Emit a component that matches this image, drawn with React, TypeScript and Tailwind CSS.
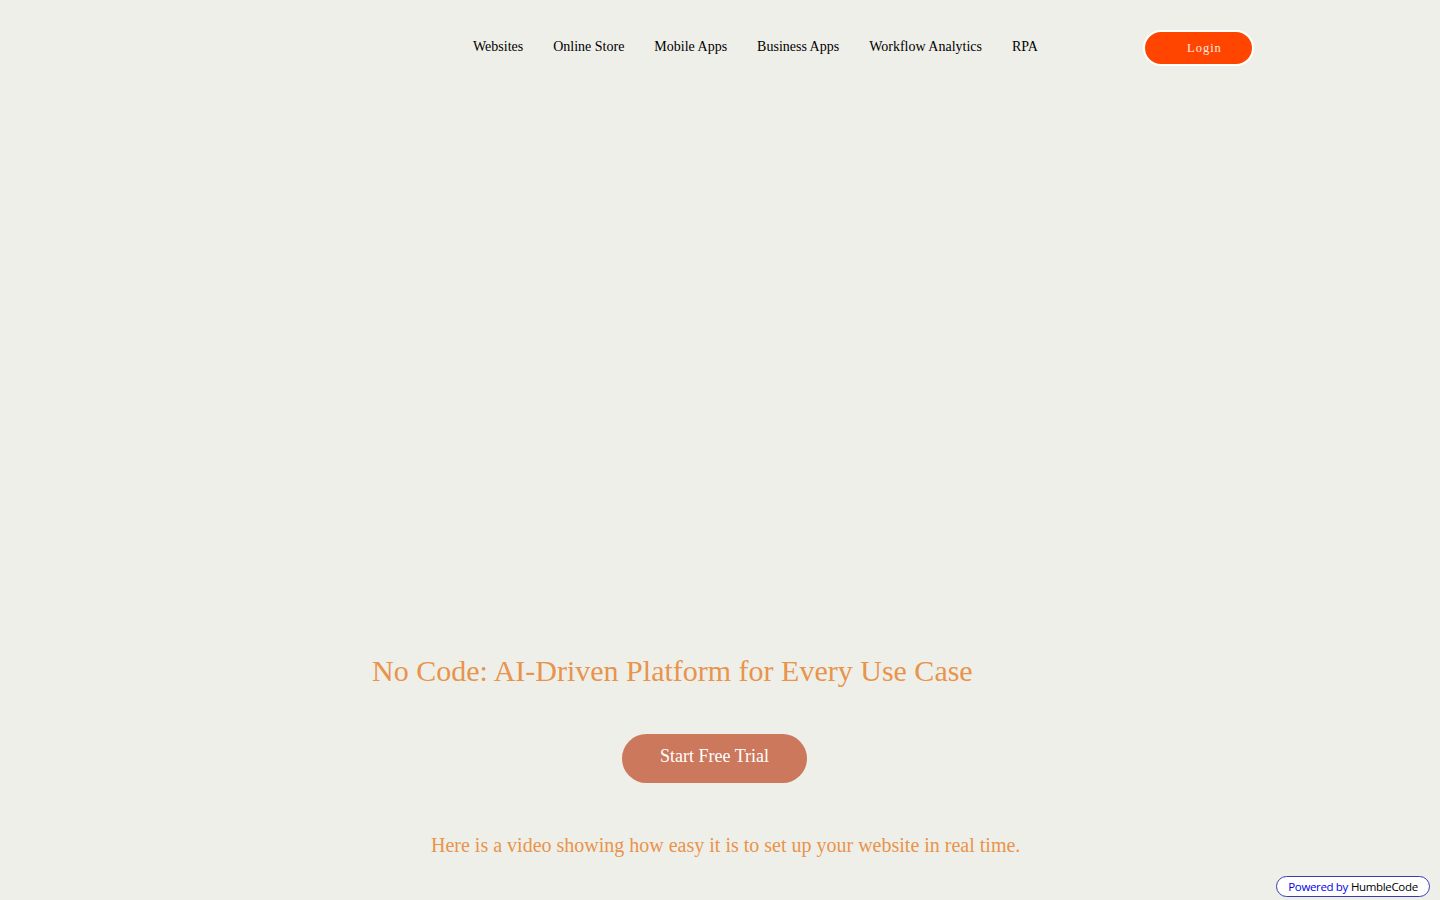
import React from "react";

const serif = { fontFamily: '"Liberation Serif", "Times New Roman", serif' };

export default function App() {
  const nav = ["Websites", "Online Store", "Mobile Apps", "Business Apps", "Workflow Analytics", "RPA"];
  return (
    <div className="min-h-[900px] w-full bg-[#efefe9] relative" style={serif}>
      <header className="flex h-[92px] items-center">
        <nav className="ml-[473px] flex items-center gap-[30px] text-[14px] text-black">
          {nav.map((n) => (
            <a key={n} className="whitespace-nowrap">{n}</a>
          ))}
        </nav>
        <button className="ml-[105px] mt-[4px] h-[36px] w-[111px] rounded-full border-2 border-white bg-[#ff4500] pl-[12px] text-[12.5px] tracking-[0.08em] text-[#fde8e0]">
          Login
        </button>
      </header>
      <div className="h-[556px]" />
      <h1 className="pl-[372px] text-[30px] leading-[46px] text-[#e8944c]">
        No Code: AI-Driven Platform for Every Use Case
      </h1>
      <div className="mt-[40px] flex pl-[622px]">
        <button className="h-[49px] w-[185px] rounded-full bg-[#cc785c] text-[18px] text-white pb-[4px]">
          Start Free Trial
        </button>
      </div>
      <p className="mt-[49px] pl-[431px] text-[20px] leading-[26px] text-[#e8944c]">
        Here is a video showing how easy it is to set up your website in real time.
      </p>
      <div
        className="absolute left-[1276px] top-[876px] flex h-[21px] w-[154px] items-center justify-center rounded-full border border-[#3b3bb0] bg-white text-[11.5px] tracking-[-0.03em]"
        style={{ fontFamily: '"Open Sans", "Liberation Sans", Arial, sans-serif' }}
      >
        <span className="text-[#0000ee]">Powered by</span>
        <span className="ml-[3px] text-black">HumbleCode</span>
      </div>
    </div>
  );
}
